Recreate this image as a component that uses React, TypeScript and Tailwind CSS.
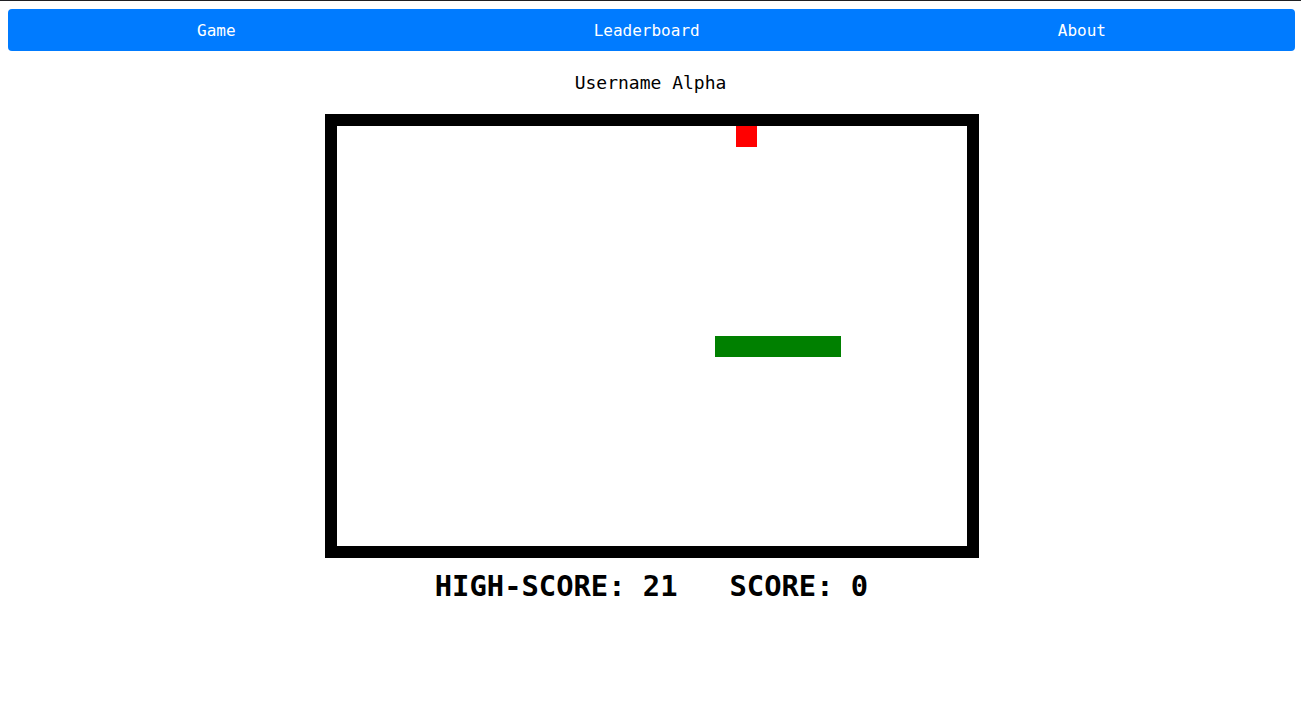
import React from "react";

const CELL = 21;
const snake = [18, 19, 20, 21, 22, 23].map((c) => ({ x: c, y: 10 }));
const food = { x: 19, y: 0 };

export default function App() {
  return (
    <div
      className="min-h-[724px] bg-white text-black"
      style={{ fontFamily: '"DejaVu Sans Mono", "Liberation Mono", monospace' }}
    >
      <div className="h-px w-full bg-[#202124]" />
      <nav className="ml-2 mr-[6px] mt-2 flex h-[42px] items-center rounded-[4px] bg-[#007bff] px-[10px] pt-[2px] text-[16px] text-white">
        <a className="flex-auto text-center">Game</a>
        <a className="flex-auto text-center">Leaderboard</a>
        <a className="flex-auto text-center">About</a>
      </nav>
      <p className="mt-[21px] mb-[21px] text-center text-[18px] leading-[21px]">Username Alpha</p>
      <div className="flex justify-center pl-[3px]">
        <div className="h-[444px] w-[654px] border-[12px] border-black bg-white">
          <svg width="630" height="420" viewBox="0 0 630 420" className="block">
            <rect x={food.x * CELL} y={food.y * CELL} width={CELL} height={CELL} fill="#ff0000" />
            {snake.map((s, i) => (
              <rect key={i} x={s.x * CELL} y={s.y * CELL} width={CELL} height={CELL} fill="#008000" />
            ))}
          </svg>
        </div>
      </div>
      <p className="mt-[11px] pl-[2px] whitespace-pre text-center text-[28.8px] font-bold leading-[34px]">
        {"HIGH-SCORE: 21   SCORE: 0"}
      </p>
    </div>
  );
}
